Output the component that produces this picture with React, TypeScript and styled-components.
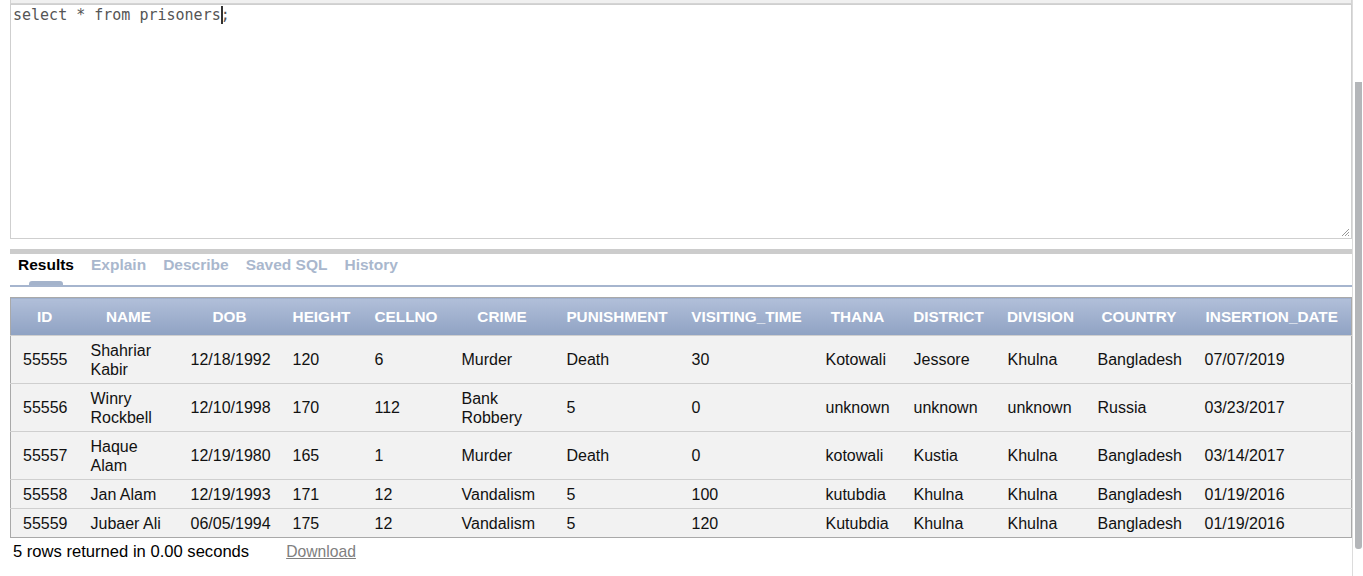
import React from "react";
import styled, { createGlobalStyle } from "styled-components";

const Global = createGlobalStyle`
  html, body { margin: 0; padding: 0; background: #fff; }
  body { font-family: "Liberation Sans", Arial, sans-serif; overflow: hidden; }
`;

const Page = styled.div`
  display: flex;
  width: 1363px;
  height: 576px;
  overflow: hidden;
`;

const Main = styled.div`
  width: 1342px;
  padding-left: 10px;
  display: flex;
  flex-direction: column;
`;

const TopStrip = styled.div`
  height: 3px;
  background: #f0f0f0;
  border: 1px solid #d4d4d4;
  border-top: none;
`;

const Editor = styled.div`
  position: relative;
  height: 231px;
  border: 1px solid #cfcfcf;
  background: #fff;
  padding: 1px 2px 1px;
  font-family: "DejaVu Sans Mono", monospace;
  font-size: 15px;
  line-height: 18px;
  color: #555;
  white-space: pre;
`;

const Caret = styled.span`
  display: inline-block;
  width: 2px;
  height: 18px;
  background: #333;
  vertical-align: top;
  margin-right: -2px;
`;

const Grip = styled.svg`
  position: absolute;
  right: 1px;
  bottom: 1px;
`;

const Splitter = styled.div`
  margin-top: 10px;
  height: 5px;
  background: #cccccc;
`;

const Tabs = styled.div`
  display: flex;
  gap: 17px;
  padding: 0 0 0 8px;
  height: 31px;
  border-bottom: 2px solid #a6b5ce;
  box-sizing: content-box;
`;

const Tab = styled.div<{ $active?: boolean }>`
  position: relative;
  height: 20px;
  font-size: 15.5px;
  font-weight: bold;
  line-height: 18px;
  padding-top: 2px;
  box-sizing: border-box;
  color: ${(p) => (p.$active ? "#000" : "#a9b7cd")};
  &::after {
    content: "";
    display: ${(p) => (p.$active ? "block" : "none")};
    position: absolute;
    left: 11px;
    width: 34px;
    bottom: -11px;
    height: 4px;
    border-radius: 3px 3px 0 0;
    background: #a4b3cb;
  }
`;

const Table = styled.table`
  margin-top: 10px;
  width: 1341px;
  border-collapse: collapse;
  table-layout: fixed;
  border: 1px solid #a9a9a9;
  font-size: 16px;
`;

const Th = styled.th`
  height: 37px;
  padding: 0 4px;
  color: #fff;
  font-size: 15.3px;
  font-weight: bold;
  text-align: center;
  white-space: nowrap;
  background: linear-gradient(#b1bfd9, #8fa2c3);
`;

const Row = styled.tr`
  background: #f2f2f2;
  border-top: 1px solid #cfcfcf;
`;

const Td = styled.td`
  padding: 4.5px 12px;
  line-height: 19px;
  color: #111;
  vertical-align: middle;
`;

const Footer = styled.div`
  display: flex;
  align-items: center;
  height: 28px;
  padding-left: 3px;
  font-size: 16.6px;
  color: #000;
`;

const DownloadLink = styled.a`
  margin-left: 37px;
  font-size: 15.7px;
  color: #808080;
  text-decoration: underline;
`;

const ScrollTrack = styled.div`
  width: 10px;
  border-left: 1px solid #dcdcdc;
  display: flex;
  flex-direction: column;
`;

const Thumb = styled.div`
  width: 7px;
  margin-left: 2px;
  margin-top: 82px;
  height: 467px;
  background: #b4b6b9;
  border-radius: 0 0 3px 3px;
`;

const columns: [string, number][] = [
  ["ID", 68],
  ["NAME", 100],
  ["DOB", 102],
  ["HEIGHT", 82],
  ["CELLNO", 87],
  ["CRIME", 105],
  ["PUNISHMENT", 125],
  ["VISITING_TIME", 134],
  ["THANA", 88],
  ["DISTRICT", 94],
  ["DIVISION", 90],
  ["COUNTRY", 107],
  ["INSERTION_DATE", 159],
];

const rows: string[][] = [
  ["55555", "Shahriar Kabir", "12/18/1992", "120", "6", "Murder", "Death", "30", "Kotowali", "Jessore", "Khulna", "Bangladesh", "07/07/2019"],
  ["55556", "Winry Rockbell", "12/10/1998", "170", "112", "Bank Robbery", "5", "0", "unknown", "unknown", "unknown", "Russia", "03/23/2017"],
  ["55557", "Haque Alam", "12/19/1980", "165", "1", "Murder", "Death", "0", "kotowali", "Kustia", "Khulna", "Bangladesh", "03/14/2017"],
  ["55558", "Jan Alam", "12/19/1993", "171", "12", "Vandalism", "5", "100", "kutubdia", "Khulna", "Khulna", "Bangladesh", "01/19/2016"],
  ["55559", "Jubaer Ali", "06/05/1994", "175", "12", "Vandalism", "5", "120", "Kutubdia", "Khulna", "Khulna", "Bangladesh", "01/19/2016"],
];

const tabs = ["Results", "Explain", "Describe", "Saved SQL", "History"];

export default function App() {
  return (
    <>
      <Global />
      <Page>
        <Main>
          <TopStrip />
          <Editor>
            select * from prisoners<Caret />;
            <Grip width="10" height="10" viewBox="0 0 10 10">
              <path d="M9 2 L2 9 M9 5 L5 9 M9 8 L8 9" stroke="#999" strokeWidth="1" />
            </Grip>
          </Editor>
          <Splitter />
          <Tabs>
            {tabs.map((t, i) => (
              <Tab key={t} $active={i === 0}>
                {t}
              </Tab>
            ))}
          </Tabs>
          <Table>
            <colgroup>
              {columns.map(([n, w]) => (
                <col key={n} style={{ width: w }} />
              ))}
            </colgroup>
            <thead>
              <tr>
                {columns.map(([n]) => (
                  <Th key={n}>{n}</Th>
                ))}
              </tr>
            </thead>
            <tbody>
              {rows.map((r) => (
                <Row key={r[0]}>
                  {r.map((c, i) => (
                    <Td key={i}>{c}</Td>
                  ))}
                </Row>
              ))}
            </tbody>
          </Table>
          <Footer>
            5 rows returned in 0.00 seconds
            <DownloadLink href="#">Download</DownloadLink>
          </Footer>
        </Main>
        <ScrollTrack>
          <Thumb />
        </ScrollTrack>
      </Page>
    </>
  );
}
